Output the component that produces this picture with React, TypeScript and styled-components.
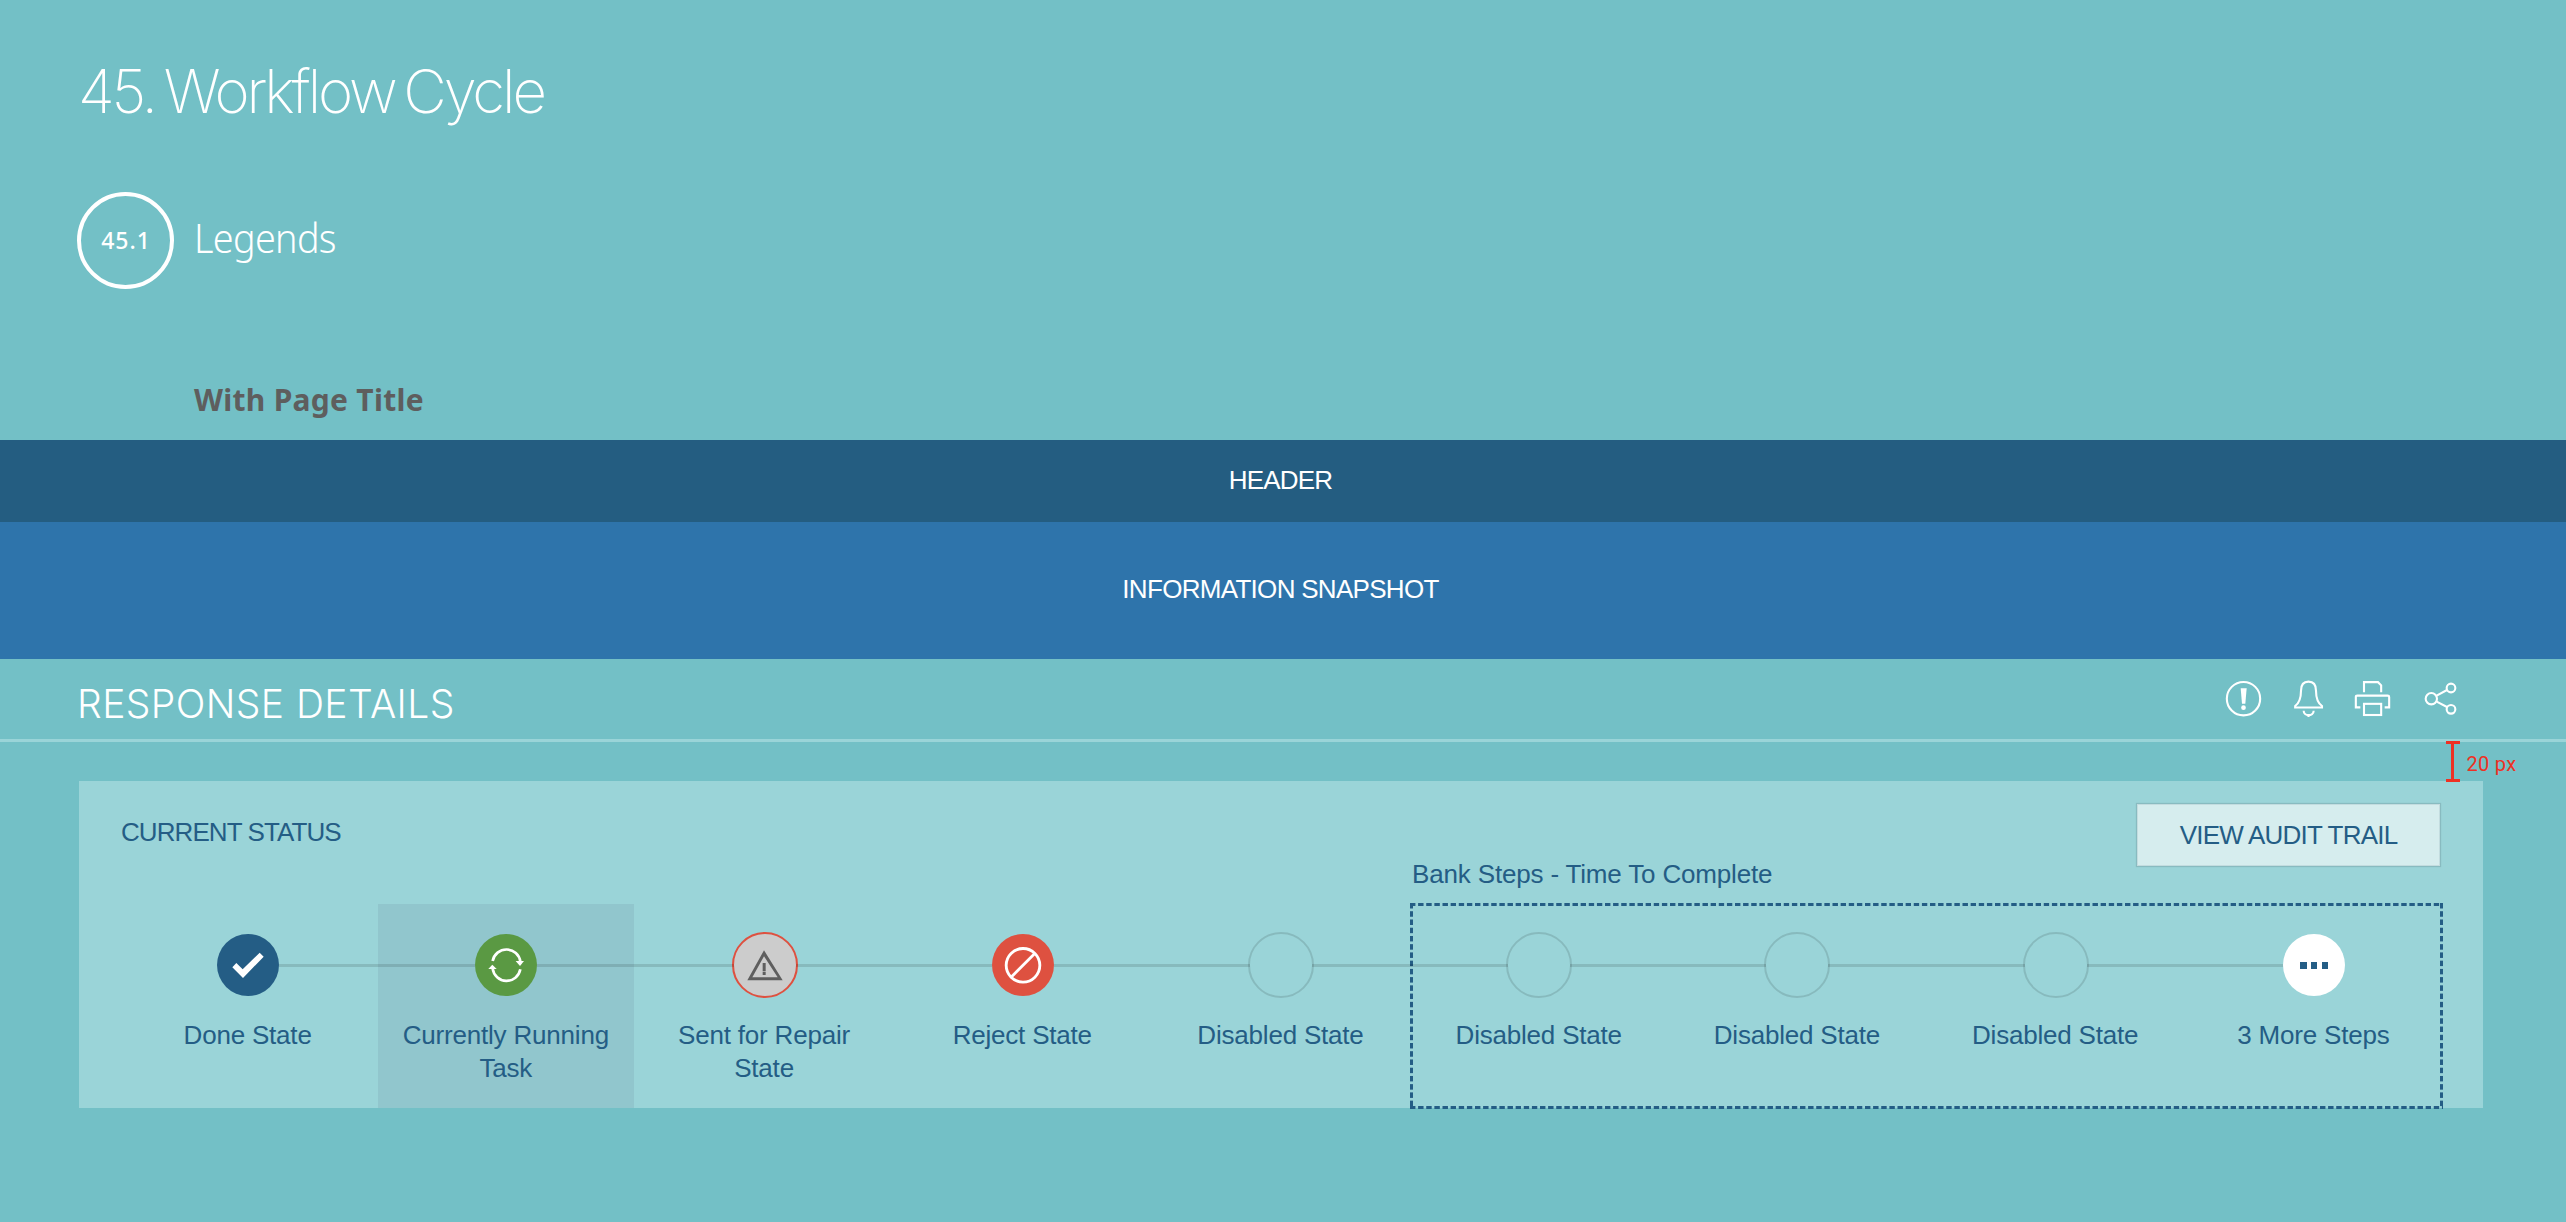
import React from "react";
import styled, { createGlobalStyle, css } from "styled-components";

const color = {
  page: "#73c0c6",
  header: "#245d81",
  snapshot: "#2e74ab",
  panel: "#9ad4d8",
  current: "#91c6cd",
  ink: "#245d85",
  grey: "#5e5e5e",
  green: "#5a9943",
  red: "#de5140",
  redline: "#ee3124",
  track: "rgba(0, 0, 0, 0.12)",
};

const humanist = `"Noto Sans", "Open Sans", sans-serif`;
const grotesque = `"Liberation Sans", Arial, sans-serif`;
const thin = `Inter, "Liberation Sans", sans-serif`;

const GlobalStyle = createGlobalStyle`
  *, *::before, *::after { box-sizing: border-box; }
  body { margin: 0; background: ${color.page}; }
  h1, h2, h3, p { margin: 0; font-weight: inherit; }
`;

const Page = styled.div`
  display: flex;
  flex-direction: column;
  min-height: 1222px;
  background: ${color.page};
  font-family: ${grotesque};
  font-size: 26px;
`;

/* ---- Masthead ---- */

const Masthead = styled.header`
  display: flex;
  flex-direction: column;
  align-items: flex-start;
  height: 440px;
  padding: 55px 77px 0;
`;

const Title = styled.h1`
  padding-left: 1px;
  font: 150 60px/72px ${thin};
  letter-spacing: -3.12px;
  word-spacing: -5px;
  color: #fff;
  white-space: nowrap;
`;

const Section = styled.div`
  display: flex;
  align-items: center;
  gap: 19.6px;
  margin-top: 65px;
`;

const SectionNumber = styled.span`
  display: flex;
  align-items: center;
  justify-content: center;
  width: 97px;
  height: 97px;
  padding: 0 0 2px 1px;
  border: 4.5px solid #fff;
  border-radius: 50%;
  color: #fff;
  font: 550 23px/32px ${humanist};
  letter-spacing: 1px;
`;

const SectionName = styled.h2`
  padding: 0 0 7px 0;
  color: #fff;
  font: 300 41px/56px ${humanist};
  letter-spacing: -0.7px;
  transform: scaleX(0.92);
  transform-origin: left center;
`;

const Variant = styled.h3`
  margin: 91px 0 0 117px;
  color: ${color.grey};
  font: 680 30px/40px ${humanist};
  letter-spacing: 0.28px;
`;

/* ---- Full-width bands ---- */

const Band = styled.div<{ $height: number; $fill: string; $lift: number; $track: number }>`
  display: flex;
  align-items: center;
  justify-content: center;
  height: ${(p) => p.$height}px;
  padding: 0 5px ${(p) => p.$lift}px 0;
  background: ${(p) => p.$fill};
  color: #fff;
  letter-spacing: ${(p) => p.$track}px;
`;

const TitleBar = styled.div`
  display: flex;
  align-items: center;
  justify-content: space-between;
  height: 83px;
  padding: 0 105px 0 76px;
  border-bottom: 3px solid ${color.panel};
`;

const PageTitle = styled.h2`
  padding: 9px 0 0 1px;
  color: #fff;
  font: 300 39px/48px ${thin};
  letter-spacing: 0.42px;
`;

const Actions = styled.div`
  display: flex;
  align-items: center;
  gap: 25px;
`;

const ActionIcon = styled.svg`
  width: 40px;
  height: 40px;
  fill: none;
  stroke: #fff;
  stroke-width: 6.3;

  &:last-child {
    margin-left: 2px;
  }
`;

/* ---- Content ---- */

const Content = styled.main`
  position: relative;
  padding: 39px 83px 0 79px;
`;

const Measure = styled.div`
  position: absolute;
  top: -1px;
  left: 2446px;
  display: flex;
  gap: 6.5px;
  color: ${color.redline};
`;

const Bracket = styled.span`
  display: flex;
  justify-content: center;
  width: 14px;
  height: 41px;
  border: solid ${color.redline};
  border-width: 3px 0;

  &::before {
    content: "";
    width: 3px;
    margin-right: 1px;
    background: ${color.redline};
  }
`;

const MeasureText = styled.span`
  padding-top: 11px;
  font: 400 20px/24px Roboto, sans-serif;
  letter-spacing: 0.3px;
`;

const Panel = styled.section`
  display: flex;
  flex-direction: column;
  height: 327px;
  background: ${color.panel};
  color: ${color.ink};
`;

const PanelHead = styled.div`
  display: flex;
  align-items: flex-start;
  justify-content: space-between;
  height: 123px;
  padding: 22px 42px 0 42px;
`;

const PanelTitle = styled.h3`
  margin-top: 14px;
  font-size: 26px;
  line-height: 30px;
  letter-spacing: -0.92px;
`;

const AuditButton = styled.button`
  width: 305px;
  height: 64px;
  padding: 0;
  border: 1px solid #88bbc0;
  background: #d6edee;
  box-shadow: inset 0 0 0 1px #c3dcdf, 0 0 1px #88bbc0;
  color: ${color.ink};
  font: 400 26px/30px ${grotesque};
  letter-spacing: -0.78px;
`;

/* ---- Steps ---- */

const Steps = styled.div`
  flex: 1;
  display: grid;
  grid-template-columns: repeat(9, 1fr);
  margin: 0 40px;
`;

const BankGroup = styled.div`
  position: relative;
  grid-column: 6 / span 4;
  display: grid;
  grid-template-columns: repeat(4, 1fr);
`;

const horizontalDash = `linear-gradient(90deg, ${color.ink} 61.5%, transparent 61.5%)`;
const verticalDash = `linear-gradient(180deg, ${color.ink} 61.5%, transparent 61.5%)`;

const DashedFrame = styled.div`
  position: absolute;
  inset: -1px 0;
  pointer-events: none;
  background-image: ${horizontalDash}, ${horizontalDash}, ${verticalDash}, ${verticalDash};
  background-size: 8.13px 3px, 8.13px 3px, 3px 8.24px, 3px 8.24px;
  background-position: 0 0, 0 100%, 0 0, 100% 0;
  background-repeat: round no-repeat, round no-repeat, no-repeat round, no-repeat round;
`;

const GroupLabel = styled.p`
  position: absolute;
  bottom: calc(100% + 15px);
  left: 2px;
  line-height: 30px;
  letter-spacing: -0.17px;
  white-space: nowrap;
`;

const StepCell = styled.div<{ $current: boolean; $linked: boolean }>`
  position: relative;
  display: flex;
  flex-direction: column;
  align-items: center;
  gap: 23px;
  padding-top: 30px;
  ${(p) =>
    p.$current &&
    css`
      background: linear-gradient(${color.current}, ${color.current}) 1px 0 / 256px 100% no-repeat;
    `}
  ${(p) =>
    p.$linked &&
    css`
      &::after {
        content: "";
        position: absolute;
        z-index: 1;
        top: 60px;
        left: calc(50% + 31px);
        width: calc(100% - 62px);
        height: 3px;
        background: ${color.track};
      }
    `}
`;

const Marker = styled.span<{ $fill: string; $ring?: string }>`
  display: flex;
  align-items: center;
  justify-content: center;
  width: 62px;
  height: 62px;
  border-radius: 50%;
  background: ${(p) => p.$fill};
  ${(p) =>
    p.$ring &&
    css`
      width: 66px;
      height: 66px;
      margin: -2px;
      border: 2px solid ${p.$ring};
    `}
`;

const Glyph = styled.svg`
  flex: none;
  width: 62px;
  height: 62px;
`;

const Label = styled.span`
  width: 230px;
  padding-right: 1px;
  line-height: 33px;
  letter-spacing: -0.2px;
  text-align: center;
`;

type State = "done" | "running" | "repair" | "reject" | "disabled" | "more";

const markerStyle: Record<State, { fill: string; ring?: string }> = {
  done: { fill: color.ink },
  running: { fill: color.green },
  repair: { fill: "#cccccc", ring: color.red },
  reject: { fill: color.red },
  disabled: { fill: "transparent", ring: color.track },
  more: { fill: "#fff" },
};

const glyphs: Partial<Record<State, React.ReactNode>> = {
  done: <polygon points="46,100 58,87 77,106 128,56 140,68 78,132" fill="#fff" />,
  running: (
    <>
      <g fill="none" stroke="#fff" strokeWidth="8">
        <path d="M53 81 A42 42 0 0 1 136 83" />
        <path d="M53 104 A42 42 0 0 0 136 106" />
      </g>
      <polygon points="122,81 147,81 135,96" fill="#fff" />
      <polygon points="40,105 65,105 52,92" fill="#fff" />
    </>
  ),
  repair: (
    <g fill={color.grey}>
      <path fillRule="evenodd" d="M90 48 L146 138 H40 Z M90 66 L55 129 H131 Z" transform="translate(0 1)" />
      <rect x="86" y="87" width="9" height="25" />
      <rect x="86" y="114" width="9" height="9" />
    </g>
  ),
  reject: (
    <g fill="none" stroke="#fff" strokeWidth="8.5">
      <circle cx="93" cy="94" r="50.5" />
      <path d="M58 129 L129 58" />
    </g>
  ),
  more: (
    <g fill={color.ink}>
      <rect x="51" y="84" width="21" height="21" />
      <rect x="84" y="84" width="18" height="21" />
      <rect x="117" y="84" width="18" height="21" />
    </g>
  ),
};

interface StepData {
  state: State;
  label: string;
}

const customerSteps: StepData[] = [
  { state: "done", label: "Done State" },
  { state: "running", label: "Currently Running Task" },
  { state: "repair", label: "Sent for Repair State" },
  { state: "reject", label: "Reject State" },
  { state: "disabled", label: "Disabled State" },
];

const bankSteps: StepData[] = [
  { state: "disabled", label: "Disabled State" },
  { state: "disabled", label: "Disabled State" },
  { state: "disabled", label: "Disabled State" },
  { state: "more", label: "3 More Steps" },
];

function Step({ state, label }: StepData) {
  const { fill, ring } = markerStyle[state];
  return (
    <StepCell $current={state === "running"} $linked={state !== "more"}>
      <Marker $fill={fill} $ring={ring}>
        {glyphs[state] && <Glyph viewBox="0 0 186 186">{glyphs[state]}</Glyph>}
      </Marker>
      <Label>{label}</Label>
    </StepCell>
  );
}

export default function App() {
  return (
    <>
      <GlobalStyle />
      <Page>
        <Masthead>
          <Title>45. Workflow Cycle</Title>
          <Section>
            <SectionNumber>45.1</SectionNumber>
            <SectionName>Legends</SectionName>
          </Section>
          <Variant>With Page Title</Variant>
        </Masthead>

        <Band $height={82} $fill={color.header} $lift={1} $track={-0.85}>HEADER</Band>
        <Band $height={137} $fill={color.snapshot} $lift={3} $track={-0.7}>INFORMATION SNAPSHOT</Band>

        <TitleBar>
          <PageTitle>RESPONSE DETAILS</PageTitle>
          <Actions>
            <ActionIcon viewBox="132 57 120 120">
              <circle cx="190.5" cy="116" r="50" />
              <path d="M182 85 H200 L196 131 H186 Z" fill="#fff" stroke="none" />
              <circle cx="190.5" cy="143" r="7" fill="#fff" stroke="none" />
            </ActionIcon>
            <ActionIcon viewBox="327 57 120 120">
              <path d="M345.5 142.5 V138 C356 130 363 117 363 92 C363 74 371 65 385.5 65 C400 65 408 74 408 92 C408 117 415 130 426 138 V142.5 Z" />
              <path d="M371 152 C371 161 378 165.5 385.5 165.5 C393 165.5 401 161 401 152" />
              <path d="M385.5 165 V171" />
            </ActionIcon>
            <ActionIcon viewBox="522 57 120 120">
              <path d="M552 97 V66.5 H594 L603.5 76 V97" />
              <path d="M541 142 H527.5 V111 Q527.5 107 532 107 H623 Q627.5 107 627.5 111 V142 H614" />
              <rect x="552" y="131.5" width="51.5" height="33.5" />
            </ActionIcon>
            <ActionIcon viewBox="723 57 120 120">
              <circle cx="754" cy="116" r="17" />
              <circle cx="813" cy="84" r="13" />
              <circle cx="813" cy="148" r="13" />
              <path d="M770 107 L801 90 M770 125 L801 141" />
            </ActionIcon>
          </Actions>
        </TitleBar>

        <Content>
          <Measure>
            <Bracket />
            <MeasureText>20 px</MeasureText>
          </Measure>
          <Panel>
            <PanelHead>
              <PanelTitle>CURRENT STATUS</PanelTitle>
              <AuditButton type="button">VIEW AUDIT TRAIL</AuditButton>
            </PanelHead>
            <Steps>
              {customerSteps.map((step, i) => (
                <Step key={i} {...step} />
              ))}
              <BankGroup>
                <GroupLabel>Bank Steps - Time To Complete</GroupLabel>
                <DashedFrame />
                {bankSteps.map((step, i) => (
                  <Step key={i} {...step} />
                ))}
              </BankGroup>
            </Steps>
          </Panel>
        </Content>
      </Page>
    </>
  );
}
